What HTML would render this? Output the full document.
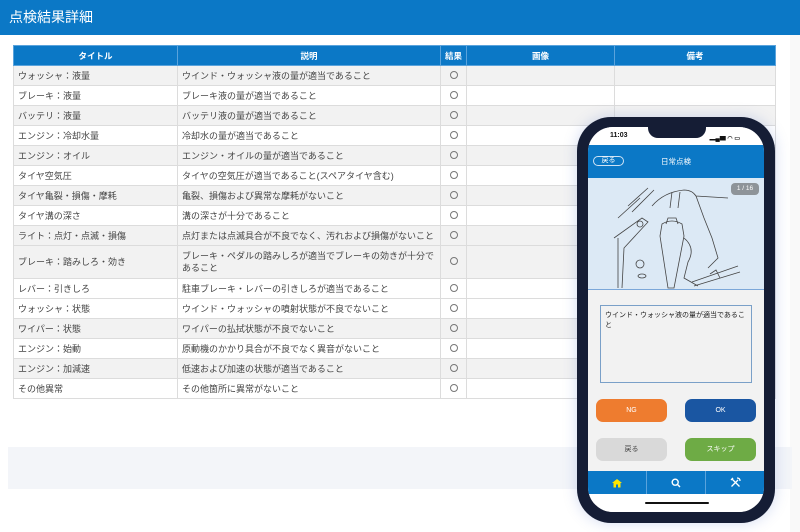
<!DOCTYPE html>
<html><head><meta charset="utf-8"><style>
*{margin:0;padding:0;box-sizing:border-box}
body{width:800px;height:532px;overflow:hidden;background:#fff;font-family:"Liberation Sans","Noto Sans CJK JP",sans-serif;position:relative}
.hdr{position:absolute;left:0;top:0;width:800px;height:35px;background:#0b78c6;color:#fff;font-size:14px;line-height:35px;padding-left:9px}
table{position:absolute;left:13px;top:45px;width:763px;border-collapse:collapse;font-size:9px;color:#444}
th{background:#0b78c6;color:#fff;height:20px;font-weight:bold;font-size:8.5px;border:1px solid #5aa3dc}
td{border:1px solid #dcdcdc;height:20px;padding:0 4px;line-height:12px}
tr.s td{background:#f2f2f2}
td.c{text-align:center;padding:0}
.o{display:inline-block;width:8px;height:8px;border:1px solid #777;border-radius:50%}
.band{position:absolute;left:8px;top:447px;width:784px;height:42px;background:#f3f5f9}
.sb{position:absolute;left:790px;top:35px;width:10px;height:497px;background:#f9f9f9}
.phone{position:absolute;left:577px;top:117px;width:198px;height:406px;background:#151d35;border-radius:34px;box-shadow:0 0 14px rgba(80,110,200,.25)}
.scr{position:absolute;left:11px;top:10px;width:176px;height:385px;background:#f2f2f2;border-radius:25px;overflow:hidden}
.notch{position:absolute;left:60px;top:0;width:58px;height:11px;background:#151d35;border-radius:0 0 10px 10px}
.st{height:18px;background:#fff;font-size:7px;font-weight:bold;padding:5px 0 0 22px;color:#111}
.bar{height:33px;background:#0b78c6;color:#fff;font-size:7.5px;position:relative}
.bk{position:absolute;left:5px;top:11px;width:31px;height:10px;border:1px solid #cfe3f5;border-radius:5px;font-size:7px;text-align:center;line-height:8px}
.img{height:112px;background:#dce9f5;position:relative;border-bottom:1px solid #7ba7d9}
.pg{position:absolute;right:5px;top:5px;width:28px;height:12px;background:#8e9499;border-radius:4px;color:#fff;font-size:6.5px;text-align:center;line-height:12px}
.ta{position:absolute;left:12px;top:178px;width:152px;height:78px;border:1px solid #7aa0c8;background:#f2f2f2;font-size:7px;padding:5px 4px;line-height:10px;color:#222}
.b{position:absolute;width:71px;height:23px;border-radius:7px;font-size:7px;text-align:center;line-height:23px;color:#fff}
.tab{position:absolute;left:0;top:344px;width:176px;height:23px;background:#0b78c6;display:flex}
.tab div{flex:1;border-right:1px solid #5aa3dc;display:flex;align-items:center;justify-content:center}
.home{position:absolute;left:57px;top:375px;width:64px;height:2px;background:#111;border-radius:1px}
</style></head><body>
<div class="hdr">点検結果詳細</div>
<div class="sb"></div>
<table>
<tr><th style="width:164px">タイトル</th><th style="width:263px">説明</th><th style="width:26px">結果</th><th style="width:148px">画像</th><th>備考</th></tr>
<tr class="s"><td>ウォッシャ：液量</td><td>ウインド・ウォッシャ液の量が適当であること</td><td class="c"><span class="o"></span></td><td></td><td></td></tr>
<tr><td>ブレーキ：液量</td><td>ブレーキ液の量が適当であること</td><td class="c"><span class="o"></span></td><td></td><td></td></tr>
<tr class="s"><td>バッテリ：液量</td><td>バッテリ液の量が適当であること</td><td class="c"><span class="o"></span></td><td></td><td></td></tr>
<tr><td>エンジン：冷却水量</td><td>冷却水の量が適当であること</td><td class="c"><span class="o"></span></td><td></td><td></td></tr>
<tr class="s"><td>エンジン：オイル</td><td>エンジン・オイルの量が適当であること</td><td class="c"><span class="o"></span></td><td></td><td></td></tr>
<tr><td>タイヤ空気圧</td><td>タイヤの空気圧が適当であること(スペアタイヤ含む)</td><td class="c"><span class="o"></span></td><td></td><td></td></tr>
<tr class="s"><td>タイヤ亀裂・損傷・摩耗</td><td>亀裂、損傷および異常な摩耗がないこと</td><td class="c"><span class="o"></span></td><td></td><td></td></tr>
<tr><td>タイヤ溝の深さ</td><td>溝の深さが十分であること</td><td class="c"><span class="o"></span></td><td></td><td></td></tr>
<tr class="s"><td>ライト：点灯・点滅・損傷</td><td>点灯または点滅具合が不良でなく、汚れおよび損傷がないこと</td><td class="c"><span class="o"></span></td><td></td><td></td></tr>
<tr class="s"><td style="height:33px">ブレーキ：踏みしろ・効き</td><td>ブレーキ・ペダルの踏みしろが適当でブレーキの効きが十分であること</td><td class="c"><span class="o"></span></td><td></td><td></td></tr>
<tr><td>レバー：引きしろ</td><td>駐車ブレーキ・レバーの引きしろが適当であること</td><td class="c"><span class="o"></span></td><td></td><td></td></tr>
<tr><td>ウォッシャ：状態</td><td>ウインド・ウォッシャの噴射状態が不良でないこと</td><td class="c"><span class="o"></span></td><td></td><td></td></tr>
<tr class="s"><td>ワイパー：状態</td><td>ワイパーの払拭状態が不良でないこと</td><td class="c"><span class="o"></span></td><td></td><td></td></tr>
<tr><td>エンジン：始動</td><td>原動機のかかり具合が不良でなく異音がないこと</td><td class="c"><span class="o"></span></td><td></td><td></td></tr>
<tr class="s"><td>エンジン：加減速</td><td>低速および加速の状態が適当であること</td><td class="c"><span class="o"></span></td><td></td><td></td></tr>
<tr><td>その他異常</td><td>その他箇所に異常がないこと</td><td class="c"><span class="o"></span></td><td></td><td></td></tr>
</table>
<div class="band"></div>
<div class="phone"><div class="scr">
<div class="st">11:03<span style="position:absolute;right:24px;top:6px;font-size:6px">▂▄▆ ◠ ▭</span></div>
<div class="notch"></div>
<div class="bar"><div class="bk">戻る</div><div style="text-align:center;line-height:33px">日常点検</div></div>
<div class="img"><div class="pg">1 / 16</div>
<svg width="176" height="112" viewBox="0 0 176 112" fill="none" stroke="#444" stroke-width=".8">
<path d="M40 28 L60 10 M44 34 L66 12 M30 40 L52 20 M26 60 L54 40 L60 44 L36 70 L34 110 M30 60 L30 110"/>
<path d="M64 28 Q76 14 96 12 Q104 12 108 18 L140 20 M84 14 L82 30 M92 14 L90 30"/>
<path d="M74 46 Q84 40 94 46 L96 58 L86 110 L80 110 L72 58 Z M78 46 L80 40 L88 40 L90 46"/>
<path d="M96 60 Q108 70 100 84 L96 100 L110 108 M108 18 L116 40 L124 60 L130 80 L120 90"/>
<circle cx="52" cy="46" r="3"/><circle cx="52" cy="86" r="4"/><ellipse cx="54" cy="98" rx="4" ry="2"/>
<path d="M104 104 L150 88 M106 108 L152 94 M122 96 L128 92 L132 100"/>
</svg></div>
<div class="ta">ウインド・ウォッシャ液の量が適当であること</div>
<div class="b" style="left:8px;top:272px;background:#ee7c2f">NG</div>
<div class="b" style="left:97px;top:272px;background:#1a56a2">OK</div>
<div class="b" style="left:8px;top:311px;background:#d9d9d9;color:#444">戻る</div>
<div class="b" style="left:97px;top:311px;background:#6eab45">スキップ</div>
<div class="tab"><div><svg width="10" height="10" viewBox="0 0 10 10"><path d="M5 1 L10 5 L8.5 5 L8.5 9.5 L6 9.5 L6 6.5 L4 6.5 L4 9.5 L1.5 9.5 L1.5 5 L0 5 Z" fill="#ffe600"/></svg></div>
<div><svg width="10" height="10" viewBox="0 0 10 10" fill="none" stroke="#fff" stroke-width="1.4"><circle cx="4.2" cy="4.2" r="3"/><path d="M6.4 6.4 L9 9"/></svg></div>
<div style="border:none"><svg width="11" height="11" viewBox="0 0 11 11" fill="none" stroke="#fff" stroke-width="1.3"><path d="M1.5 9.5 L8 3 M7 1 Q10 1 10 4 M2 2 L9.5 9.5 M1 3 L3 1"/></svg></div></div>
<div style="position:absolute;left:0;top:367px;width:176px;height:18px;background:#fff"></div>
<div class="home"></div>
</div></div>
</body></html>
